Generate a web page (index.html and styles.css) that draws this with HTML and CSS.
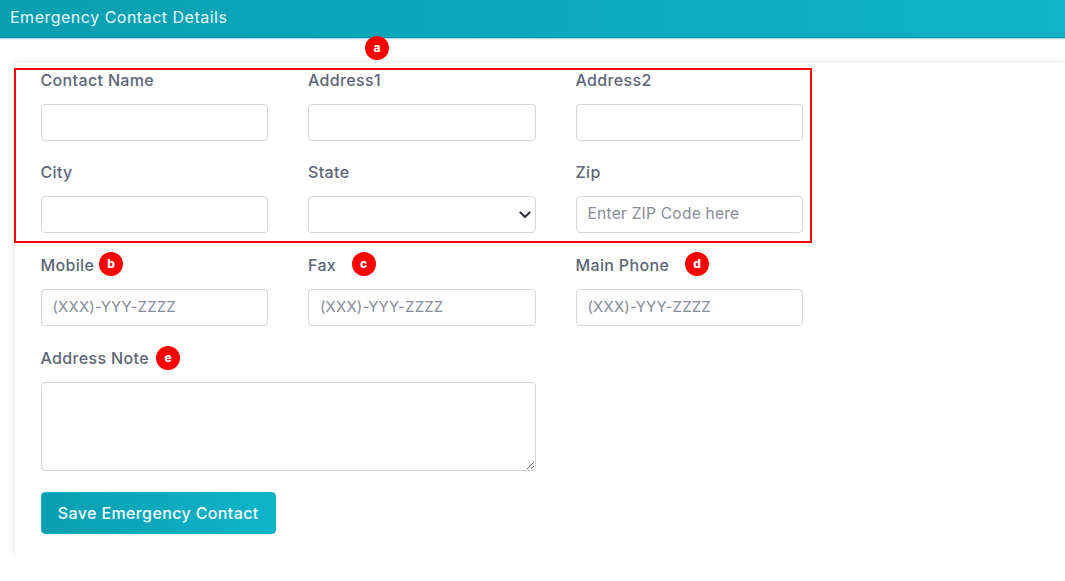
FILE: index.html
```html
<!DOCTYPE html>
<html lang="en">
<head>
<meta charset="utf-8">
<title>Emergency Contact Details</title>
<link rel="stylesheet" href="styles.css">
</head>
<body>
<header class="bar">Emergency Contact Details</header>
<main class="card">
  <form class="grid">
    <div class="field"><label>Contact Name</label><input class="ctl" type="text"></div>
    <div class="field"><label>Address1</label><input class="ctl" type="text"></div>
    <div class="field"><label>Address2</label><input class="ctl" type="text"></div>
    <div class="field"><label>City</label><input class="ctl" type="text"></div>
    <div class="field"><label>State</label>
      <div class="selectwrap"><select class="ctl sel"><option></option></select>
        <svg class="chev" width="12" height="8" viewBox="0 0 12 8"><path d="M1.5 1.5 6 6l4.5-4.5" fill="none" stroke="#343a40" stroke-width="2.2" stroke-linecap="round" stroke-linejoin="round"/></svg>
      </div></div>
    <div class="field"><label>Zip</label><input class="ctl zip" type="text" placeholder="Enter ZIP Code here"></div>
    <div class="field"><label>Mobile<span class="dot d-b">b</span></label><input class="ctl ph" type="text" placeholder="(XXX)-YYY-ZZZZ"></div>
    <div class="field"><label>Fax<span class="dot d-c">c</span></label><input class="ctl ph" type="text" placeholder="(XXX)-YYY-ZZZZ"></div>
    <div class="field"><label>Main Phone<span class="dot d-d">d</span></label><input class="ctl ph" type="text" placeholder="(XXX)-YYY-ZZZZ"></div>
    <div class="field wide"><label>Address Note<span class="dot d-e">e</span></label><textarea class="ctl note"></textarea></div>
  </form>
  <button class="save" type="button">Save Emergency Contact</button>
</main>
<div class="redbox"></div>
<span class="dot d-a">a</span>
</body>
</html>
```
FILE: styles.css
```css
* { box-sizing: border-box; }
html, body { margin: 0; background: #fff; }
body {
  position: relative;
  width: 1065px;
  height: 581px;
  overflow: hidden;
  font-family: "Inter", "Liberation Sans", sans-serif;
  color: #5a6478;
}
.bar {
  height: 38px;
  padding: 7px 0 0 10px;
  background: linear-gradient(90deg, #0a9fb0, #0fb4ca);
  border-bottom: 1px solid #0a93a5;
  box-shadow: 0 1px 1px rgba(10,147,165,.35);
  color: #e3f6f8;
  font-size: 16px;
  letter-spacing: .5px;
  line-height: 20px;
  font-weight: 400;
}
.card {
  height: 493px;
  margin: 25px 0 0 15px;
  padding: 4.75px 0 0 25.5px;
  background: #fff;
  box-shadow: 0 0 8px rgba(0,0,0,.1);
  clip-path: inset(-12px -12px 0 -12px);
}
.grid {
  display: grid;
  grid-template-columns: repeat(3, 227.5px);
  column-gap: 40px;
  row-gap: 19.6px;
  align-items: start;
}
.field { display: flex; flex-direction: column; }
.wide { grid-column: span 2; }
label {
  position: relative;
  height: 24px;
  margin-bottom: 12px;
  font-size: 16px;
  letter-spacing: .35px;
  line-height: 24px;
  font-weight: 500;
  color: #5d6678;
}
.ctl {
  display: block;
  width: 100%;
  height: 37px;
  padding: 0 11px 2px;
  border: 1px solid #d0d6df;
  border-radius: 4px;
  background: #fff;
  font-family: "Inter", "Liberation Sans", sans-serif;
  font-size: 15px;
  color: #495057;
}
.ctl::placeholder { color: #868d98; opacity: 1; }
.ph { letter-spacing: .15px; }
.zip { font-size: 15.5px; letter-spacing: .25px; }
.selectwrap { position: relative; }
.sel { appearance: none; }
.chev { position: absolute; right: 5px; top: 15px; }
.note { height: 89.5px; resize: vertical; }
.save {
  display: block;
  width: 235.5px;
  height: 42.5px;
  margin-top: 20.75px;
  padding: 0;
  border: 1px solid #0fb0c6;
  border-radius: 4px;
  background: linear-gradient(90deg, #0a9fb0, #0fb4ca);
  color: #eefbfc;
  font-family: "Inter", "Liberation Sans", sans-serif;
  font-size: 16px;
  letter-spacing: .38px;
  font-weight: 500;
}
.redbox {
  position: absolute;
  left: 14px;
  top: 68px;
  width: 798px;
  height: 175px;
  border: 2px solid #f00;
}
.dot {
  position: absolute;
  width: 24px;
  height: 24px;
  border-radius: 50%;
  background: #f00;
  color: #fff;
  font-size: 12px;
  letter-spacing: 0;
  line-height: 23px;
  font-weight: 800;
  text-align: center;
}
.d-a { left: 365px; top: 36px; }
.d-b { left: 58.5px; top: -1px; }
.d-c { left: 43.5px; top: -1px; }
.d-d { left: 109.5px; top: -1px; }
.d-e { left: 115.5px; top: 0; }
```
